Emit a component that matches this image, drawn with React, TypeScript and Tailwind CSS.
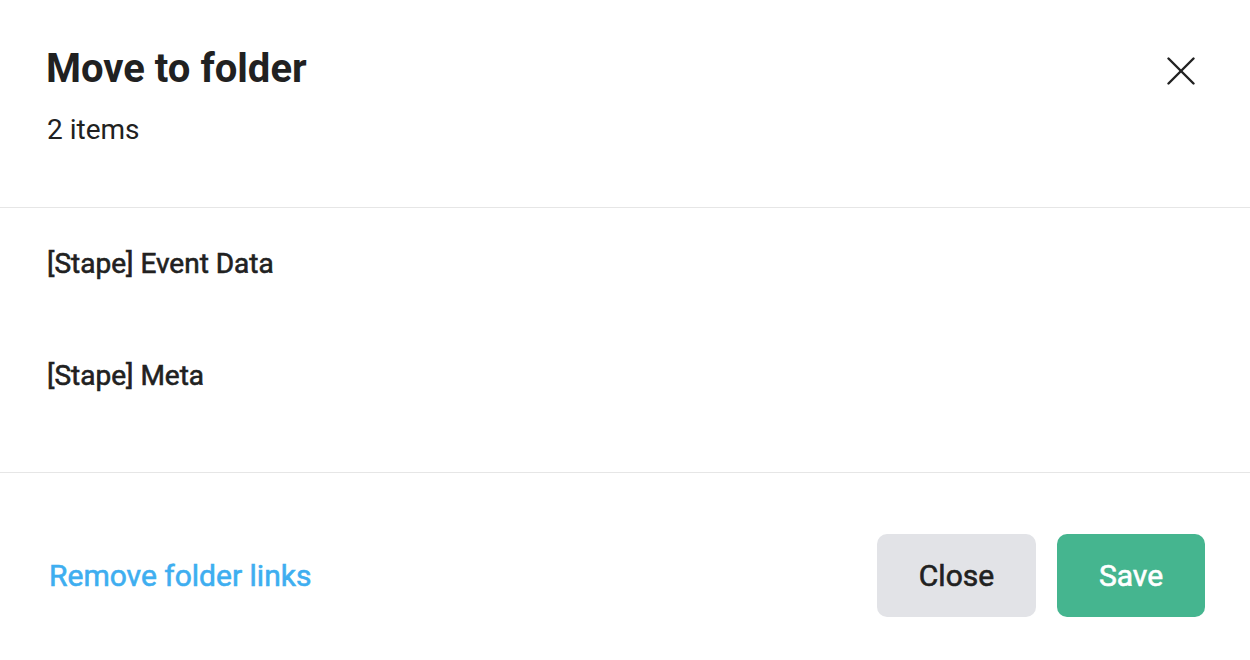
import React from 'react';

const items = ['[Stape] Event Data', '[Stape] Meta'];

const App: React.FC = () => {
  return (
    <div
      className="w-[1250px] h-[660px] bg-white flex flex-col text-[#212121]"
      style={{ fontFamily: 'Roboto, "Liberation Sans", sans-serif' }}
    >
      <div className="flex items-start justify-between pl-[46px] pr-[54px] pt-[45px] pb-[60px] border-b border-[#e6e6e6]">
        <div className="flex flex-col gap-[20px]">
          <h1 className="text-[40px] leading-[48px] font-bold">Move to folder</h1>
          <p className="pl-[1px] text-[28px] leading-[34px]">2 items</p>
        </div>
        <button className="mt-[11px] w-[30px] h-[30px] flex items-center justify-center text-[#212121]">
          <svg width="28" height="28" viewBox="0 0 28 28" fill="none" stroke="currentColor" strokeWidth="2.4" strokeLinecap="round">
            <line x1="1.5" y1="1.5" x2="26.5" y2="26.5" />
            <line x1="26.5" y1="1.5" x2="1.5" y2="26.5" />
          </svg>
        </button>
      </div>

      <div className="flex flex-col pb-[40px] border-b border-[#e6e6e6]">
        {items.map((item) => (
          <div key={item} className="h-[112px] flex items-center px-[47px]">
            <span className="text-[28px] leading-[34px] [-webkit-text-stroke:0.6px_currentColor]">{item}</span>
          </div>
        ))}
      </div>

      <div className="flex items-center justify-between pl-[49px] pr-[45px] pt-[61px]">
        <button className="text-[30px] leading-[36px] text-[#3eaef0] [-webkit-text-stroke:0.6px_currentColor]">
          Remove folder links
        </button>
        <div className="flex gap-[21px]">
          <button className="w-[159px] h-[83px] rounded-[10px] bg-[#e2e3e7] text-[30px] text-[#212121] [-webkit-text-stroke:0.6px_currentColor]">
            Close
          </button>
          <button className="w-[148px] h-[83px] rounded-[10px] bg-[#45b58f] text-[30px] text-white [-webkit-text-stroke:0.6px_currentColor]">
            Save
          </button>
        </div>
      </div>
    </div>
  );
};

export default App;
